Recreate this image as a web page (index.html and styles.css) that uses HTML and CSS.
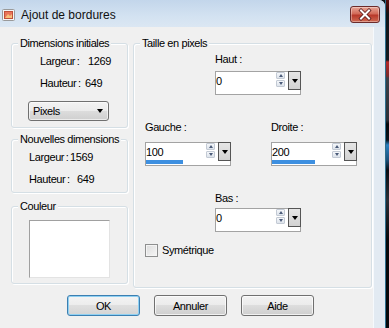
FILE: index.html
```html
<!DOCTYPE html>
<html lang="fr">
<head>
<meta charset="utf-8">
<title>Ajout de bordures</title>
<link rel="stylesheet" href="styles.css">
</head>
<body>
<div class="screen">
  <div class="window">
    <div class="titlebar">
      <svg class="appicon" viewBox="0 0 14 14" width="14" height="14">
        <rect x="0.5" y="1.5" width="12" height="11" rx="1" fill="#f4f4f4" stroke="#9a9a9a"/>
        <rect x="2.5" y="3.5" width="8" height="7" fill="#e8745a" stroke="#c0503a"/>
        <path d="M3 10 L6 6 L8 8 L10 6 L10 10 Z" fill="#f6c07a"/>
      </svg>
      <span class="title">Ajout de bordures</span>
      <div class="close">
        <svg viewBox="0 0 30 17" width="30" height="17">
          <path d="M11 4.5 L19 12.5 M19 4.5 L11 12.5" stroke="#5a1a1a" stroke-width="3.6" stroke-linecap="square"/>
          <path d="M11 4.5 L19 12.5 M19 4.5 L11 12.5" stroke="#ffffff" stroke-width="2" stroke-linecap="square"/>
        </svg>
      </div>
    </div>
    <div class="body">
      <div class="client">
        <div class="main">
          <div class="leftcol">
            <div class="grp g1">
              <div class="legend">Dimensions initiales</div>
              <div class="row r1 in1"><span class="lab w48">Largeur :</span><span>1269</span></div>
              <div class="row r2 in1"><span class="lab w45">Hauteur :</span><span>649</span></div>
              <div class="select">
                <span>Pixels</span>
                <span class="tri"></span>
              </div>
            </div>
            <div class="grp g2">
              <div class="legend">Nouvelles dimensions</div>
              <div class="row r1 in2"><span class="lab w41">Largeur :</span><span>1569</span></div>
              <div class="row r2 in2"><span class="lab w48">Hauteur :</span><span>649</span></div>
            </div>
            <div class="grp g3">
              <div class="legend">Couleur</div>
              <div class="swatch"></div>
            </div>
          </div>
          <div class="grp rg">
            <div class="legend">Taille en pixels</div>
            <div class="field haut">
              <div class="flabel">Haut :</div>
              <div class="spin">
                <div class="spin-top">
                  <span class="val">0</span>
                  <span class="arrows"><span class="ar up"></span><span class="ar dn"></span></span>
                  <span class="dd"><span class="tri"></span></span>
                </div>
                <div class="track"></div>
              </div>
            </div>
            <div class="pair">
              <div class="field gauche">
                <div class="flabel">Gauche :</div>
                <div class="spin">
                  <div class="spin-top">
                    <span class="val">100</span>
                    <span class="arrows"><span class="ar up"></span><span class="ar dn"></span></span>
                    <span class="dd"><span class="tri"></span></span>
                  </div>
                  <div class="track"><span class="fill" style="width:37px"></span></div>
                </div>
              </div>
              <div class="field droite">
                <div class="flabel">Droite :</div>
                <div class="spin">
                  <div class="spin-top">
                    <span class="val">200</span>
                    <span class="arrows"><span class="ar up"></span><span class="ar dn"></span></span>
                    <span class="dd"><span class="tri"></span></span>
                  </div>
                  <div class="track"><span class="fill" style="width:43px"></span></div>
                </div>
              </div>
            </div>
            <div class="field bas">
              <div class="flabel">Bas :</div>
              <div class="spin">
                <div class="spin-top">
                  <span class="val">0</span>
                  <span class="arrows"><span class="ar up"></span><span class="ar dn"></span></span>
                  <span class="dd"><span class="tri"></span></span>
                </div>
                <div class="track"></div>
              </div>
            </div>
            <div class="check">
              <span class="box"></span>
              <span>Symétrique</span>
            </div>
          </div>
        </div>
        <div class="buttons">
          <div class="btn default">OK</div>
          <div class="btn">Annuler</div>
          <div class="btn">Aide</div>
        </div>
      </div>
      <div class="frame"></div>
    </div>
  </div>
  <div class="desk"></div>
</div>
</body>
</html>
```
FILE: styles.css
```css
* { box-sizing: border-box; }

html, body {
  margin: 0;
  padding: 0;
}

body {
  width: 389px;
  height: 328px;
  overflow: hidden;
  background: #0d1116;
  font-family: "Liberation Sans", Arial, sans-serif;
  font-size: 11px;
  letter-spacing: -0.4px;
  color: #000;
}

.screen {
  display: flex;
  width: 389px;
  height: 328px;
}

.window {
  width: 385px;
  height: 328px;
  display: flex;
  flex-direction: column;
  background: #dfe8f1;
  border-top-right-radius: 6px;
  overflow: hidden;
}

.titlebar {
  height: 27px;
  flex: none;
  display: flex;
  align-items: center;
  padding-left: 2px;
  background: linear-gradient(#c3d6eb, #d3e2f1 60%, #dbe7f3);
}

.appicon {
  flex: none;
  margin-top: 2px;
}

.title {
  margin-left: 5px;
  font-size: 12px;
  letter-spacing: 0;
  color: #111;
  margin-top: 2px;
}

.close {
  margin-left: auto;
  margin-right: 5px;
  align-self: flex-start;
  margin-top: 6px;
  width: 30px;
  height: 17px;
  border: 1px solid #6b2b2b;
  border-radius: 3px;
  background: linear-gradient(#e8a597, #d26a58 45%, #b8382a 55%, #cf6a52);
  box-shadow: inset 0 0 0 1px rgba(255,255,255,0.35);
  display: flex;
}

.close svg {
  margin: -1px;
}

.body {
  flex: 1;
  display: flex;
}

.client {
  width: 373px;
  flex: none;
  background: #f0f0f0;
  padding: 16px 0 0 11px;
}

.frame {
  flex: 1;
  background: linear-gradient(90deg, #f6f9fc 0, #f6f9fc 1px, #e2eaf2 1px);
}

.desk {
  flex: 1;
  background: linear-gradient(#5a1010 0, #3a0a0a 8px, #101418 14px, #141a20 60px, #b52828 62px, #7a2a2a 76px, #3b4048 78px, #2b2f36 120px, #05070a 124px, #08131c 140px, #2a7fc0 145px, #1c4f78 160px, #0a0d12 170px, #2a2e36 200px, #06080b 240px);
  border-left: 1px solid #2d6f8f;
}

/* group boxes */
.grp {
  border: 1px solid #d5dfe5;
  border-radius: 3px;
  box-shadow: inset 1px 1px 0 #fff, 1px 1px 0 #fff;
}

.legend {
  width: max-content;
  margin: -7px 0 0 6px;
  padding: 0 2px;
  line-height: 12px;
  background: #f0f0f0;
}

.main {
  display: flex;
  align-items: flex-start;
  gap: 5px;
}

.leftcol {
  width: 117px;
  display: flex;
  flex-direction: column;
}

.g1 { height: 85px; }
.g2 { height: 54px; margin-top: 11px; }
.g3 { height: 78px; margin-top: 13px; }

.row {
  line-height: 14px;
  height: 14px;
  white-space: nowrap;
}
.row.r1 { margin-top: 5px; }
.row.r2 { margin-top: 8px; }
.in1 { padding-left: 28px; }
.in2 { padding-left: 17px; }

.lab {
  display: inline-block;
  word-spacing: -1px;
}
.w48 { width: 48px; }
.w45 { width: 45px; }
.w41 { width: 41px; }

.select {
  margin: 11px 0 0 16px;
  width: 81px;
  height: 20px;
  border: 1px solid #707070;
  border-radius: 3px;
  background: linear-gradient(#f2f2f2, #ebebeb 50%, #dddddd 50%, #cfcfcf);
  box-shadow: inset 0 0 0 1px rgba(255,255,255,0.6);
  display: flex;
  align-items: center;
  padding: 0 5px 0 4px;
  justify-content: space-between;
}

.tri {
  width: 0;
  height: 0;
  border-left: 3.5px solid transparent;
  border-right: 3.5px solid transparent;
  border-top: 4px solid #000;
}

.swatch {
  margin: 8px 0 0 17px;
  width: 81px;
  height: 58px;
  background: #fff;
  border: 1px solid;
  border-color: #a0a0a0 #e3e3e3 #e3e3e3 #a0a0a0;
}

/* right group */
.rg {
  width: 239px;
  height: 245px;
}

.flabel {
  line-height: 14px;
  height: 14px;
}

.field.haut { margin: 3px 0 0 81px; width: 86px; }
.field.haut .spin { margin-top: 5px; }

.pair {
  display: flex;
  gap: 40px;
  margin: 25px 0 0 11px;
}
.pair .field { width: 86px; }
.pair .spin { margin-top: 8px; }

.field.bas { margin: 25px 0 0 81px; width: 86px; }
.field.bas .spin { margin-top: 3px; }

.spin {
  width: 86px;
  height: 24px;
  border: 1px solid #a3a3a3;
  background: #fff;
  display: flex;
  flex-direction: column;
}

.spin-top {
  display: flex;
  height: 17px;
}

.val {
  flex: 1;
  line-height: 14px;
  padding-top: 2px;
}

.arrows {
  width: 9px;
  display: flex;
  flex-direction: column;
  gap: 1px;
  margin-right: 3px;
}

.ar {
  height: 7px;
  border: 1px solid #c3cad4;
  border-radius: 1px;
  background: linear-gradient(#f5f7fa, #dde3eb);
  display: flex;
  align-items: center;
  justify-content: center;
}

.ar::after {
  content: "";
  width: 0;
  height: 0;
  border-left: 2.5px solid transparent;
  border-right: 2.5px solid transparent;
}
.ar.up::after { border-bottom: 3px solid #4a5a78; }
.ar.dn::after { border-top: 3px solid #4a5a78; }

.dd {
  width: 13px;
  height: 19px;
  margin: -1px -1px 0 0;
  border: 1px solid #555;
  background: linear-gradient(#e6e6e6, #d2d2d2);
  display: flex;
  align-items: center;
  justify-content: center;
}

.track {
  height: 4px;
  display: flex;
}

.fill {
  height: 4px;
  background: #3d8fe0;
}

.check {
  margin: 11px 0 0 11px;
  display: flex;
  align-items: center;
  gap: 4px;
  line-height: 14px;
}

.check .box {
  width: 13px;
  height: 13px;
  border: 1px solid #8e8f8f;
  background: linear-gradient(135deg, #dcdcdc, #f6f6f6);
  box-shadow: inset 0 0 0 1px #f4f4f4;
}

/* buttons */
.buttons {
  display: flex;
  gap: 14px;
  margin: 7px 0 0 56px;
}

.btn {
  width: 73px;
  height: 21px;
  border: 1px solid #707070;
  border-radius: 3px;
  background: linear-gradient(#f2f2f2, #ebebeb 50%, #dddddd 50%, #cfcfcf);
  box-shadow: inset 0 0 0 1px rgba(255,255,255,0.7);
  display: flex;
  align-items: center;
  justify-content: center;
}

.btn.default {
  border-color: #3c7fb1;
  box-shadow: inset 0 0 0 1px #8fd0f2;
  background: linear-gradient(#f4f4f4, #ececec 50%, #dfdfdf 50%, #d4d4d4);
}
```
